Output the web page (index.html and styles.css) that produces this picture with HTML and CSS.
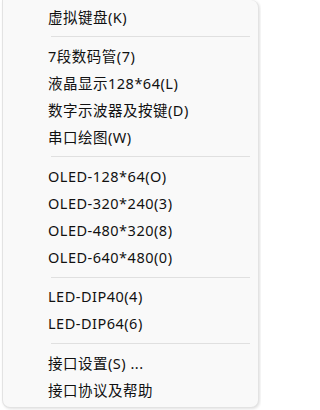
FILE: index.html
```html
<!DOCTYPE html>
<html lang="zh-CN">
<head>
<meta charset="utf-8">
<title>菜单</title>
<link rel="stylesheet" href="styles.css">
</head>
<body>
<div class="menu">
  <div class="item">虚拟键盘(K)</div>
  <div class="sep"></div>
  <div class="item">7段数码管(7)</div>
  <div class="item">液晶显示128*64(L)</div>
  <div class="item">数字示波器及按键(D)</div>
  <div class="item">串口绘图(W)</div>
  <div class="sep"></div>
  <div class="item">OLED-128*64(O)</div>
  <div class="item">OLED-320*240(3)</div>
  <div class="item">OLED-480*320(8)</div>
  <div class="item">OLED-640*480(0)</div>
  <div class="sep"></div>
  <div class="item">LED-DIP40(4)</div>
  <div class="item">LED-DIP64(6)</div>
  <div class="sep"></div>
  <div class="item">接口设置(S) ...</div>
  <div class="item">接口协议及帮助</div>
</div>
</body>
</html>
```

FILE: styles.css
```css
html, body {
  margin: 0;
  padding: 0;
  background: #ffffff;
}
body {
  width: 261px;
  height: 410px;
  overflow: hidden;
  font-family: "Noto Sans", "Noto Sans CJK SC", sans-serif;
  font-size: 14.5px;
  letter-spacing: 0.5px;
  color: #111111;
}
.menu {
  margin-left: 2px;
  width: 257px;
  height: 408px;
  box-sizing: border-box;
  background: #f9f9f9;
  border: 1px solid #e3e3e3;
  border-top: none;
  border-radius: 0 8px 8px 8px;
  box-shadow: 1px 1px 3px rgba(0, 0, 0, 0.12);
  padding: 3.5px 0 3.5px 0;
  display: flex;
  flex-direction: column;
}
.item {
  height: 27px;
  line-height: 27px;
  padding-left: 45px;
  white-space: nowrap;
}
.sep {
  height: 12.5px;
  box-sizing: border-box;
  padding-top: 5.5px;
}
.sep::before {
  content: "";
  display: block;
  margin-left: 48px;
  margin-right: 8px;
  height: 1px;
  background: #e0e0e0;
}
```
